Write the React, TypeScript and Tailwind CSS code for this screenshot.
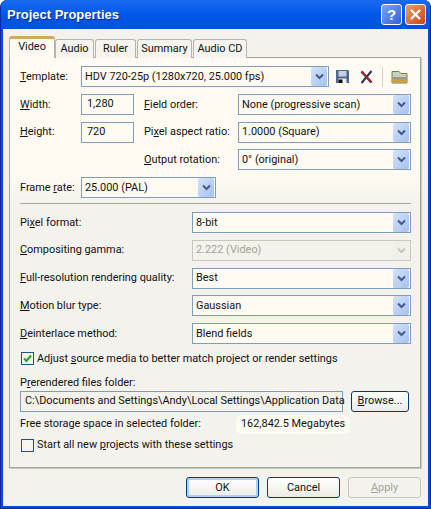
import type { ReactNode } from 'react';

const Chevron = ({ disabled }: { disabled?: boolean }) => (
  <div
    className={
      disabled
        ? 'flex h-[19px] w-[16px] items-center justify-center rounded-[2px] bg-[#f0efea]'
        : 'flex h-[19px] w-[16px] items-center justify-center rounded-[2px] bg-gradient-to-br from-[#d4e2f9] to-[#a5c2ee]'
    }
  >
    <svg width="9" height="7" viewBox="0 0 9 7" fill="none">
      <path d="M1 1.5 L4.5 5 L8 1.5" stroke={disabled ? '#c4c3bc' : '#43598f'} strokeWidth="2" />
    </svg>
  </div>
);

const Combo = ({ text, className, disabled }: { text: string; className: string; disabled?: boolean }) => (
  <div
    className={
      'flex h-[21px] items-center justify-between border pl-[3px] pr-px ' +
      (disabled ? 'border-[#c9c7ba] bg-[#f3f2ed] text-[#a5a497] ' : 'border-[#7f9db9] bg-[#fffbf2] ') +
      className
    }
  >
    <span className="whitespace-nowrap pt-px">{text}</span>
    <Chevron disabled={disabled} />
  </div>
);

const U = ({ children }: { children: ReactNode }) => <span className="underline underline-offset-1">{children}</span>;

const Tab = ({ label, className }: { label: string; className: string }) => (
  <div
    className={
      'flex h-[19px] items-center justify-center rounded-t-[3px] border border-b-0 border-[#b5b4a8] bg-[#f5f4ee] ' +
      className
    }
  >
    {label}
  </div>
);

const WideRow = ({ label, value, disabled }: { label: ReactNode; value: string; disabled?: boolean }) => (
  <div className="flex h-[21px] items-center justify-between">
    <span className="whitespace-nowrap pt-px">{label}</span>
    <Combo text={value} disabled={disabled} className="w-[219px]" />
  </div>
);

const Button = ({ children, className }: { children: ReactNode; className: string }) => (
  <div
    className={
      'flex h-[21px] items-center justify-center rounded-[3px] border border-[#003c74] bg-gradient-to-b from-white to-[#ecebe4] pt-px ' +
      className
    }
  >
    {children}
  </div>
);

export default function App() {
  return (
    <div className="flex h-[509px] w-[431px] flex-col overflow-hidden rounded-t-[7px] border-x border-b border-[#0a2ba0] bg-[#0349dc] font-['Roboto',sans-serif] text-[10.9px] leading-none text-[#111]">
      {/* Title bar */}
      <div className="flex h-[29px] items-center justify-between bg-gradient-to-b from-[#1a6af0] via-[#0058e8] to-[#0350d8] pl-[6px] pr-[4px]">
        <span className="font-['Liberation_Sans',sans-serif] text-[13px] font-bold text-white [text-shadow:1px_1px_#0a2a8a]">
          Project Properties
        </span>
        <div className="flex gap-[3px]">
          <div className="flex h-[21px] w-[21px] items-center justify-center rounded-[3px] border border-white bg-gradient-to-br from-[#7fa4f0] to-[#2f5fdc] font-['Liberation_Sans',sans-serif] text-[15px] font-bold text-white">
            ?
          </div>
          <div className="flex h-[21px] w-[21px] items-center justify-center rounded-[3px] border border-white bg-gradient-to-br from-[#e8a060] to-[#c8401c]">
            <svg width="11" height="11" viewBox="0 0 11 11">
              <path d="M1 1 L10 10 M10 1 L1 10" stroke="#fff" strokeWidth="2.2" />
            </svg>
          </div>
        </div>
      </div>

      {/* Client area */}
      <div className="mx-[2px] mb-[2px] flex flex-1 flex-col bg-[#f3f2ed] pl-[6px] pr-[7px] pt-[7px]">
        <div className="relative z-10 -mb-px flex h-[22px] items-end">
          <div className="flex h-[22px] w-[46px] items-center justify-center rounded-t-[3px] border-x border-t-[3px] border-x-[#b5b4a8] border-t-[#d5a85a] bg-[#fffbf2] pb-[2px]">
            Video
          </div>
          <Tab label="Audio" className="w-[39px]" />
          <Tab label="Ruler" className="ml-[1px] w-[41px]" />
          <Tab label="Summary" className="ml-[1px] w-[55px]" />
          <Tab label="Audio CD" className="ml-[1px] w-[54px]" />
        </div>

        <div className="flex h-[411px] flex-col border border-[#a5a49a] bg-[linear-gradient(#fffbf2_0%,#fffbf2_28%,#f3f2ed_36%,#f3f2ed_100%)] pl-[10px] pr-[9px] pt-[8px] shadow-[1px_1px_0_#bcd0bc]">
          <div className="flex h-[21px] items-center">
            <span className="w-[61px] pt-px">
              <U>T</U>emplate:
            </span>
            <Combo text="HDV 720-25p (1280x720, 25.000 fps)" className="w-[248px]" />
            <svg className="ml-[6px]" width="15" height="15" viewBox="0 0 15 15">
              <path d="M1 1 H13 L14 2 V14 H1 Z" fill="#4f668f" />
              <rect x="3.5" y="2" width="8" height="5.5" fill="#c4d0de" />
              <rect x="3.5" y="9.5" width="8" height="4.5" fill="#f2f2f2" />
              <rect x="3.5" y="10.5" width="4" height="3.5" fill="#111" />
            </svg>
            <svg className="ml-[10px]" width="13" height="14" viewBox="0 0 13 14">
              <path d="M11.5 1 L1.5 13" stroke="#23304f" strokeWidth="2" />
              <path d="M1.5 1.5 L11.5 12.5" stroke="#23304f" strokeWidth="2.6" />
              <path d="M1.5 1.5 L11.5 12.5" stroke="#d0202a" strokeWidth="1.4" />
            </svg>
            <div className="ml-[9px] h-[20px] w-px bg-[#d5d4cb]" />
            <svg className="ml-[8px]" width="17" height="14" viewBox="0 0 17 14">
              <path d="M1 3 V1.5 H8 L10 3.5 H16 V13 H1 Z" fill="#c2d4bc" stroke="#877b2c" />
              <rect x="1.5" y="7" width="14" height="2" fill="#9a9a94" />
              <rect x="1.5" y="9" width="14" height="4" fill="#c9a045" />
            </svg>
          </div>

          <div className="mt-[7px] grid grid-cols-[61px_53px_104px_173px] grid-rows-[21px_21px_21px] gap-y-[6.5px] [&>*]:self-center [&>span]:pt-px">
            <span>
              <U>W</U>idth:
            </span>
            <div className="flex h-[21px] items-center border border-[#7f9db9] bg-[#fffbf2] pl-[5px]">1,280</div>
            <span className="pl-[10px]">
              <U>F</U>ield order:
            </span>
            <Combo text="None (progressive scan)" className="w-[173px]" />

            <span>
              <U>H</U>eight:
            </span>
            <div className="flex h-[21px] items-center border border-[#7f9db9] bg-[#fffbf2] pl-[5px]">720</div>
            <span className="whitespace-nowrap pl-[10px]">
              Pi<U>x</U>el aspect ratio:
            </span>
            <Combo text="1.0000 (Square)" className="w-[173px]" />

            <span className="col-start-3 whitespace-nowrap pl-[10px]">
              <U>O</U>utput rotation:
            </span>
            <Combo text="0° (original)" className="w-[173px]" />
          </div>

          <div className="mt-[7px] flex h-[21px] items-center">
            <span className="w-[61px] whitespace-nowrap pt-px">
              Frame <U>r</U>ate:
            </span>
            <Combo text="25.000 (PAL)" className="w-[135px]" />
          </div>

          <div className="mt-[5px] h-px bg-[#aca899]" />

          <div className="mt-[8px] flex flex-col gap-[6.75px]">
            <WideRow label={<>Pi<U>x</U>el format:</>} value="8-bit" />
            <WideRow label={<><U>C</U>ompositing gamma:</>} value="2.222 (Video)" disabled />
            <WideRow label={<><U>F</U>ull-resolution rendering quality:</>} value="Best" />
            <WideRow label={<><U>M</U>otion blur type:</>} value="Gaussian" />
            <WideRow label={<><U>D</U>einterlace method:</>} value="Blend fields" />
          </div>

          <div className="ml-px mt-[8px] flex h-[13px] items-center gap-[3px]">
            <div className="flex h-[13px] w-[13px] items-center justify-center border border-[#1c5180] bg-[#f6f5ee]">
              <svg width="9" height="9" viewBox="0 0 9 9">
                <path d="M1 4.5 L3.5 7 L8 1.5" fill="none" stroke="#21a121" strokeWidth="2" />
              </svg>
            </div>
            <span className="pt-px">
              Adjust <U>s</U>ource media to better match project or render settings
            </span>
          </div>

          <div className="mt-[13px]">
            P<U>r</U>erendered files folder:
          </div>
          <div className="mt-[2px] flex h-[21px] items-center">
            <div className="flex h-[21px] w-[323px] items-center whitespace-nowrap border border-[#7f9db9] bg-[#f3f2ed] pl-[4px] pt-px">
              C:\Documents and Settings\Andy\Local Settings\Application Data
            </div>
            <Button className="ml-[8px] w-[58px]">
              <U>B</U>rowse...
            </Button>
          </div>

          <div className="mt-[6px] flex h-[14px] items-center">
            <span className="w-[216px] whitespace-nowrap">Free storage space in selected folder:</span>
            <span className="whitespace-nowrap rounded-[6px] bg-[#fffbf2] px-[5px] py-[4px]">162,842.5 Megabytes</span>
          </div>

          <div className="ml-px mt-[7px] flex h-[13px] items-center gap-[3px]">
            <div className="h-[13px] w-[13px] border border-[#1c5180] bg-[#f6f5ee]" />
            <span className="pt-px">
              Start all new <U>p</U>rojects with these settings
            </span>
          </div>
        </div>

        <div className="mt-[9px] flex justify-end gap-[8px]">
          <Button className="w-[73px] shadow-[inset_0_0_0_2px_#b4cdf2]">OK</Button>
          <Button className="w-[73px]">Cancel</Button>
          <div className="flex h-[21px] w-[73px] items-center justify-center rounded-[3px] border border-[#c9c7ba] pt-px text-[#a5a497]">
            <U>A</U>pply
          </div>
        </div>
      </div>
    </div>
  );
}
